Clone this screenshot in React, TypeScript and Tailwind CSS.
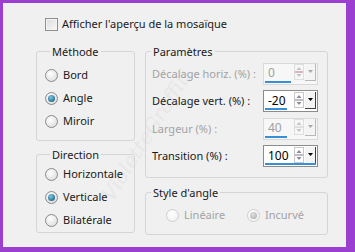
import React from "react";

type RadioProps = { checked?: boolean; disabled?: boolean; label: string };

const Radio = ({ checked, disabled, label }: RadioProps) => (
  <div className="flex h-[23px] items-center gap-[5px]">
    <span
      className={`flex h-[13px] w-[13px] shrink-0 items-center justify-center rounded-full border ${
        disabled
          ? "border-[#cfcfcf] bg-[radial-gradient(circle_at_40%_35%,#ffffff,#ececec)]"
          : "border-[#8a8a8a] bg-[radial-gradient(circle_at_40%_35%,#ffffff,#d6d6d6)]"
      }`}
    >
      {checked && (
        <span
          className={`h-[7px] w-[7px] rounded-full ${
            disabled
              ? "bg-[radial-gradient(circle_at_40%_35%,#e0e0e0,#a8a8a8)]"
              : "bg-[radial-gradient(circle_at_40%_35%,#7cc8e8,#0d4f70)]"
          }`}
        />
      )}
    </span>
    <span className={disabled ? "text-[#a3a3a3]" : "text-[#1a1a1a]"}>{label}</span>
  </div>
);

const Group = ({
  title,
  className,
  children,
}: {
  title: string;
  className: string;
  children: React.ReactNode;
}) => (
  <fieldset className={`rounded-[3px] border border-[#d5d5d5] ${className}`}>
    <legend className="ml-[5px] px-[2px] leading-[15px] text-[#1a1a1a]">{title}</legend>
    {children}
  </fieldset>
);

type SpinProps = { value: string; bar: number; disabled?: boolean; hot?: boolean };

const Spin = ({ value, bar, disabled, hot }: SpinProps) => (
  <div
    className={`flex h-[22px] w-[55px] shrink-0 flex-col border ${
      disabled ? "border-[#d9d9d9] bg-[#f7f7f7]" : "border-[#8c8c8c] bg-white"
    }`}
  >
    <div className="flex h-[17px] items-center">
      <span
        className={`flex-1 pl-[4px] pt-[1px] text-[12px] leading-[15px] ${
          disabled ? "text-[#a0a0a0]" : "text-black"
        }`}
      >
        {value}
      </span>
      <svg width="10" height="16" viewBox="0 0 10 16">
        <rect x="0.5" y="0.5" width="9" height="15" fill="none" stroke={disabled ? "#dedede" : "#c8c8c8"} />
        <line x1="1" y1="8" x2="9" y2="8" stroke={hot ? "#c07090" : disabled ? "#c8c8c8" : "#7a7a8c"} />
        <path d="M2.5 6 L5 3 L7.5 6 Z" fill={disabled ? "#c4c4c4" : "#8a8a9a"} />
        <path d="M2.5 10 L5 13 L7.5 10 Z" fill={disabled ? "#c4c4c4" : "#8a8a9a"} />
      </svg>
      <svg width="11" height="17" viewBox="0 0 11 17" className="ml-[1px] mr-[1px] mt-[1px]">
        <rect x="0" y="0" width="11" height="17" fill="#f4f4f4" />
        <line x1="10.5" y1="0" x2="10.5" y2="17" stroke={disabled ? "#b8b8b8" : "#404040"} />
        <line x1="0" y1="16.5" x2="11" y2="16.5" stroke={disabled ? "#b8b8b8" : "#404040"} />
        <path d="M3 6 L8 6 L5.5 9 Z" fill={disabled ? "#a8a8a8" : "#000"} />
      </svg>
    </div>
    <span className="mt-auto mb-[1px] ml-[1px] h-[3px] bg-[#3a8fd4]" style={{ width: bar }} />
  </div>
);

const Row = ({ label, disabled, children }: { label: string; disabled?: boolean; children: React.ReactNode }) => (
  <div className="flex h-[27.5px] items-center justify-between pr-[9px]">
    <span className={`whitespace-nowrap pl-[6px] ${disabled ? "text-[#a3a3a3]" : "text-[#1a1a1a]"}`}>{label}</span>
    {children}
  </div>
);

export default function App() {
  return (
    <div className="h-[252px] w-[355px] bg-[#9a3fcf] pt-[3px] pl-[3px]">
      <div className="relative h-[244px] w-[343px] overflow-hidden bg-[#f0f0f0] font-['Noto_Sans',sans-serif] text-[11px]">
        <span className="pointer-events-none absolute left-[68px] top-[117px] -rotate-[58deg] font-['DejaVu_Serif',serif] text-[20px] italic text-[#e7e7e7]">
          VioletteGraffiti
        </span>
        <div className="relative flex h-[41px] items-center gap-[4px] pl-[42px] pt-[2px]">
          <span className="h-[13px] w-[13px] border border-[#8e8f8f] bg-[linear-gradient(135deg,#dcdcdc,#f8f8f8)] shadow-[inset_0_0_0_1px_#f4f4f4]" />
          <span className="text-[#1a1a1a]">Afficher l'aperçu de la mosaïque</span>
        </div>
        <div className="relative flex gap-[10px] pl-[33px]">
          <div className="flex w-[99px] flex-col gap-[6px]">
            <Group title="Méthode" className="h-[97px] pl-[8px] pt-[5px]">
              <Radio label="Bord" />
              <Radio label="Angle" checked />
              <Radio label="Miroir" />
            </Group>
            <Group title="Direction" className="h-[86px] pl-[8px] pt-[1px]">
              <Radio label="Horizontale" />
              <Radio label="Verticale" checked />
              <Radio label="Bilatérale" />
            </Group>
          </div>
          <div className="flex w-[183px] flex-col gap-[7px]">
            <Group title="Paramètres" className="h-[134px] pt-[1px]">
              <Row label="Décalage horiz. (%) :" disabled>
                <Spin value="0" bar={26} disabled hot />
              </Row>
              <Row label="Décalage vert. (%) :">
                <Spin value="-20" bar={22} />
              </Row>
              <Row label="Largeur (%) :" disabled>
                <Spin value="40" bar={22} disabled />
              </Row>
              <Row label="Transition (%) :">
                <Spin value="100" bar={51} />
              </Row>
            </Group>
            <Group title="Style d'angle" className="h-[50px]">
              <div className="flex pl-[20px] pt-[4px]">
                <div className="w-[81px]">
                  <Radio label="Linéaire" disabled />
                </div>
                <Radio label="Incurvé" checked disabled />
              </div>
            </Group>
          </div>
        </div>
      </div>
    </div>
  );
}
